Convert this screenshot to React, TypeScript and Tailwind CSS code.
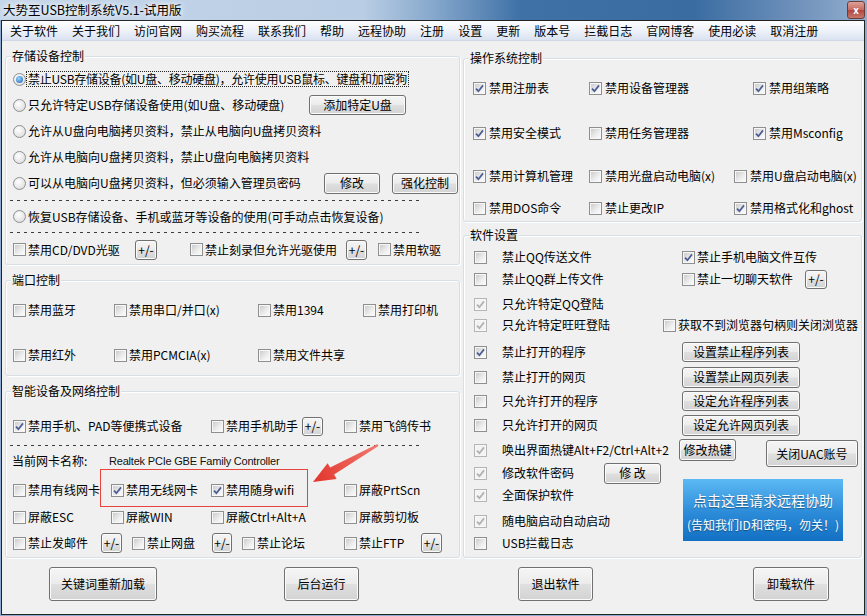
import React from "react";

type CBProps = { checked?: boolean; disabled?: boolean };

function Box({ checked, disabled }: CBProps) {
  return (
    <span
      className={
        "relative block h-[13px] w-[13px] shrink-0 border bg-[#f7f7f7] p-[1px] " +
        (disabled ? "border-[#b5b5b5]" : "border-[#8e8f8f]")
      }
    >
      <span
        className={
          "block h-full w-full " +
          (disabled ? "bg-[#f3f3f3]" : "bg-[linear-gradient(135deg,#cdcdcd,#ededed_60%,#fbfbfb)]")
        }
      />
      {checked && (
        <svg viewBox="0 0 11 11" className="absolute inset-0 h-[11px] w-[11px]">
          <path
            d="M2 5.6 4.4 8.2 9 2.4"
            fill="none"
            stroke={disabled ? "#b0b0b0" : "#4b5d92"}
            strokeWidth="1.7"
          />
        </svg>
      )}
    </span>
  );
}

function Check({
  label,
  checked,
  disabled,
  w = "",
  gap = "gap-[2px]",
}: CBProps & { label: React.ReactNode; w?: string; gap?: string }) {
  return (
    <div className={`flex shrink-0 items-center whitespace-nowrap ${gap} ${w}`}>
      <Box checked={checked} disabled={disabled} />
      <span>{label}</span>
    </div>
  );
}

function Radio({ checked }: { checked?: boolean }) {
  return (
    <span className="flex h-[13px] w-[13px] shrink-0 items-center justify-center rounded-full border border-[#8e8f8f] bg-[radial-gradient(circle_at_40%_35%,#ffffff,#d6d6d6)]">
      {checked && (
        <span className="h-[7px] w-[7px] rounded-full bg-[radial-gradient(circle_at_40%_35%,#9ad6ff,#1b5fb3)]" />
      )}
    </span>
  );
}

function Btn({ children, className = "" }: { children: React.ReactNode; className?: string }) {
  return (
    <button
      type="button"
      className={`flex shrink-0 items-center justify-center whitespace-nowrap rounded-[3px] border border-[#707070] bg-[linear-gradient(#f5f5f5,#ececec_48%,#dfdfdf_52%,#d3d3d3)] shadow-[inset_0_0_0_1px_#fbfbfb] ${className}`}
    >
      {children}
    </button>
  );
}

function Group({
  title,
  className = "",
  children,
}: {
  title: string;
  className?: string;
  children: React.ReactNode;
}) {
  return (
    <div
      className={`relative shrink-0 rounded-[3px] border border-[#d5dfe5] shadow-[inset_1px_1px_0_#ffffff,1px_1px_0_#ffffff] ${className}`}
    >
      <span className="absolute -top-[9px] left-[5px] bg-[#f0f0f0] px-[1px] leading-[16px]">{title}</span>
      {children}
    </div>
  );
}

function Dashed() {
  return (
    <div className="ml-[4px] h-[1px] w-[412px] shrink-0 bg-[linear-gradient(to_right,#3c3c3c_3px,transparent_3px)] bg-[length:7px_1px]" />
  );
}

const menu = [
  "关于软件",
  "关于我们",
  "访问官网",
  "购买流程",
  "联系我们",
  "帮助",
  "远程协助",
  "注册",
  "设置",
  "更新",
  "版本号",
  "拦截日志",
  "官网博客",
  "使用必读",
  "取消注册",
];

export default function App() {
  return (
    <div className="relative h-[616px] w-[867px] overflow-hidden bg-[#8fabcf] font-['Noto_Sans_CJK_SC','Noto_Sans',sans-serif] text-[12px] leading-[16px] text-black">
      {/* title bar */}
      <div className="flex h-[20px] items-center bg-[linear-gradient(to_right,#c5d6ea_0%,#b9cde4_42%,#86a8cc_50%,#3f71a7_60%,#3a6ca2_80%,#7898bf_94%,#93b0d1_100%)]">
        <span className="ml-[3px] text-[12.5px] [text-shadow:0_0_5px_#fff,0_0_8px_#fff]">
          大势至USB控制系统V5.1-试用版
        </span>
        <span className="ml-auto mr-[2px] flex h-[18px] w-[18px] items-center justify-center rounded-[3px] border border-[#6b3d3a] bg-[linear-gradient(#dea29a,#c6685e_50%,#b0473c_51%,#c8766c)] text-[10px] font-bold leading-none text-white">
          x
        </span>
      </div>

      <div className="ml-[1px] flex h-[595px] w-[864px] flex-col border border-[#222] bg-[#f0f0f0]">
        {/* menu bar */}
        <div className="flex h-[20px] shrink-0 items-center gap-[14px] border-b border-[#d0d8e6] bg-[linear-gradient(#fdfdfe,#eef2f9_50%,#dae2f1)] pl-[8px]">
          {menu.map((m) => (
            <span key={m} className="whitespace-nowrap">
              {m}
            </span>
          ))}
        </div>

        <div className="flex gap-[3px] pl-[3px]">
          {/* left column */}
          <div className="flex w-[455px] flex-col">
            <Group title="存储设备控制" className="mt-[15px] h-[209px]">
              <div className="flex flex-col pt-[9px]">
                <div className="flex h-[26px] items-center pl-[7px]">
                  <Radio checked />
                  <span className="whitespace-nowrap border border-dotted border-[#222] px-[1px] leading-[14px] tracking-[-0.25px]">
                    禁止USB存储设备(如U盘、移动硬盘)，允许使用USB鼠标、键盘和加密狗
                  </span>
                </div>
                <div className="flex h-[26px] items-center gap-[2px] pl-[7px]">
                  <Radio />
                  <span className="w-[279px] whitespace-nowrap">只允许特定USB存储设备使用(如U盘、移动硬盘)</span>
                  <Btn className="h-[20px] w-[97px]">添加特定U盘</Btn>
                </div>
                <div className="flex h-[26px] items-center gap-[2px] pl-[7px]">
                  <Radio />
                  <span className="whitespace-nowrap">允许从U盘向电脑拷贝资料，禁止从电脑向U盘拷贝资料</span>
                </div>
                <div className="flex h-[26px] items-center gap-[2px] pl-[7px]">
                  <Radio />
                  <span className="whitespace-nowrap">允许从电脑向U盘拷贝资料，禁止U盘向电脑拷贝资料</span>
                </div>
                <div className="flex h-[26px] items-center gap-[2px] pl-[7px]">
                  <Radio />
                  <span className="w-[294px] whitespace-nowrap">可以从电脑向U盘拷贝资料，但必须输入管理员密码</span>
                  <Btn className="h-[21px] w-[56px]">修改</Btn>
                  <Btn className="ml-[10px] h-[21px] w-[66px]">强化控制</Btn>
                </div>
                <div className="mt-[4px]">
                  <Dashed />
                </div>
                <div className="flex h-[31px] items-center gap-[2px] pl-[7px]">
                  <Radio />
                  <span className="whitespace-nowrap">恢复USB存储设备、手机或蓝牙等设备的使用(可手动点击恢复设备)</span>
                </div>
                <Dashed />
                <div className="flex h-[31px] items-center pl-[7px] pt-[2px]">
                  <Check label="禁用CD/DVD光驱" w="w-[122px]" />
                  <Btn className="h-[20px] w-[22px]">+/-</Btn>
                  <Check label="禁止刻录但允许光驱使用" w="ml-[33px] w-[156px]" />
                  <Btn className="h-[20px] w-[21px]">+/-</Btn>
                  <Check label="禁用软驱" w="ml-[11px]" />
                </div>
              </div>
            </Group>

            <Group title="端口控制" className="mt-[15px] h-[96px]">
              <div className="flex flex-col pl-[7px] pt-[18px]">
                <div className="flex h-[22px] items-center">
                  <Check label="禁用蓝牙" w="w-[101px]" />
                  <Check label="禁用串口/并口(x)" w="w-[144px]" />
                  <Check label="禁用1394" w="w-[105px]" />
                  <Check label="禁用打印机" />
                </div>
                <div className="mt-[23px] flex h-[22px] items-center">
                  <Check label="禁用红外" w="w-[101px]" />
                  <Check label="禁用PCMCIA(x)" w="w-[144px]" />
                  <Check label="禁用文件共享" />
                </div>
              </div>
            </Group>

            <Group title="智能设备及网络控制" className="mt-[15px] h-[167px]">
              <div className="flex flex-col pt-[23px]">
                <div className="flex h-[22px] items-center pl-[7px]">
                  <Check label="禁用手机、PAD等便携式设备" checked w="w-[198px]" />
                  <Check label="禁用手机助手" w="w-[91px]" />
                  <Btn className="h-[19px] w-[21px]">+/-</Btn>
                  <Check label="禁用飞鸽传书" w="ml-[21px]" />
                </div>
                <div className="mt-[8px]">
                  <Dashed />
                </div>
                <div className="mt-[5px] flex h-[20px] items-center pl-[6px]">
                  <span className="w-[97px] whitespace-nowrap">当前网卡名称:</span>
                  <span className="whitespace-nowrap font-['Liberation_Sans',Arial,sans-serif] text-[11px] tracking-[-0.2px] text-[#111]">
                    Realtek PCIe GBE Family Controller
                  </span>
                </div>
                <div className="mt-[8px] flex h-[22px] items-center pl-[7px]">
                  <Check label="禁用有线网卡" w="w-[98px]" />
                  <Check label="禁用无线网卡" checked w="w-[100px]" />
                  <Check label="禁用随身wifi" checked w="w-[133px]" />
                  <Check label="屏蔽PrtScn" />
                </div>
                <div className="mt-[5px] flex h-[22px] items-center pl-[7px]">
                  <Check label="屏蔽ESC" w="w-[98px]" />
                  <Check label="屏蔽WIN" w="w-[100px]" />
                  <Check label="屏蔽Ctrl+Alt+A" w="w-[133px]" />
                  <Check label="屏蔽剪切板" />
                </div>
                <div className="mt-[4px] flex h-[22px] items-center pl-[7px]">
                  <Check label="禁止发邮件" w="w-[88px]" />
                  <Btn className="h-[20px] w-[21px]">+/-</Btn>
                  <Check label="禁止网盘" w="ml-[10px] w-[80px]" />
                  <Btn className="h-[20px] w-[20px]">+/-</Btn>
                  <Check label="禁止论坛" w="ml-[10px] w-[102px]" />
                  <Check label="禁止FTP" w="w-[77px]" />
                  <Btn className="h-[20px] w-[21px]">+/-</Btn>
                </div>
              </div>
            </Group>
          </div>

          {/* right column */}
          <div className="flex w-[399px] flex-col">
            <Group title="操作系统控制" className="mt-[17px] h-[164px]">
              <div className="flex flex-col pl-[9px] pt-[18px]">
                <div className="flex h-[22px] items-center">
                  <Check label="禁用注册表" checked w="w-[116px]" gap="gap-[3px]" />
                  <Check label="禁用设备管理器" checked w="w-[164px]" gap="gap-[3px]" />
                  <Check label="禁用组策略" checked gap="gap-[3px]" />
                </div>
                <div className="mt-[23px] flex h-[22px] items-center">
                  <Check label="禁用安全模式" checked w="w-[116px]" gap="gap-[3px]" />
                  <Check label="禁用任务管理器" w="w-[164px]" gap="gap-[3px]" />
                  <Check label="禁用Msconfig" checked gap="gap-[3px]" />
                </div>
                <div className="mt-[21px] flex h-[22px] items-center">
                  <Check label="禁用计算机管理" checked w="w-[116px]" gap="gap-[3px]" />
                  <Check label="禁用光盘启动电脑(x)" w="w-[145px]" gap="gap-[3px]" />
                  <Check label="禁用U盘启动电脑(x)" gap="gap-[3px]" />
                </div>
                <div className="mt-[10px] flex h-[22px] items-center">
                  <Check label="禁用DOS命令" w="w-[116px]" gap="gap-[3px]" />
                  <Check label="禁止更改IP" w="w-[145px]" gap="gap-[3px]" />
                  <Check label="禁用格式化和ghost" checked gap="gap-[3px]" />
                </div>
              </div>
            </Group>

            <Group title="软件设置" className="mt-[13px] h-[323px]">
              <div className="flex flex-col pl-[10px] pt-[11px]">
                <div className="flex h-[20px] items-center">
                  <Check label="禁止QQ传送文件" w="w-[208px]" gap="gap-[15px]" />
                  <Check label="禁止手机电脑文件互传" checked />
                </div>
                <div className="mt-[2px] flex h-[20px] items-center">
                  <Check label="禁止QQ群上传文件" w="w-[208px]" gap="gap-[15px]" />
                  <Check label="禁止一切聊天软件" w="w-[123px]" />
                  <Btn className="h-[19px] w-[22px]">+/-</Btn>
                </div>
                <div className="mt-[5px] flex h-[20px] items-center">
                  <Check label="只允许特定QQ登陆" checked disabled gap="gap-[15px]" />
                </div>
                <div className="mt-[1px] flex h-[20px] items-center">
                  <Check label="只允许特定旺旺登陆" checked disabled w="w-[189px]" gap="gap-[15px]" />
                  <Check label="获取不到浏览器句柄则关闭浏览器" />
                </div>
                <div className="mt-[7px] flex h-[20px] items-center">
                  <Check label="禁止打开的程序" checked w="w-[208px]" gap="gap-[15px]" />
                  <Btn className="h-[20px] w-[118px]">设置禁止程序列表</Btn>
                </div>
                <div className="mt-[5px] flex h-[20px] items-center">
                  <Check label="禁止打开的网页" w="w-[208px]" gap="gap-[15px]" />
                  <Btn className="h-[21px] w-[118px]">设置禁止网页列表</Btn>
                </div>
                <div className="mt-[4px] flex h-[20px] items-center">
                  <Check label="只允许打开的程序" w="w-[208px]" gap="gap-[15px]" />
                  <Btn className="h-[20px] w-[118px]">设定允许程序列表</Btn>
                </div>
                <div className="mt-[4px] flex h-[20px] items-center">
                  <Check label="只允许打开的网页" w="w-[208px]" gap="gap-[15px]" />
                  <Btn className="h-[21px] w-[118px]">设定允许网页列表</Btn>
                </div>
                <div className="mt-[5px] flex h-[20px] items-center">
                  <Check label="唤出界面热键Alt+F2/Ctrl+Alt+2" checked disabled w="w-[205px]" gap="gap-[15px]" />
                  <Btn className="h-[22px] w-[57px]">修改热键</Btn>
                  <Btn className="ml-[30px] h-[27px] w-[92px] self-start">关闭UAC账号</Btn>
                </div>
                <div className="flex">
                  <div className="flex w-[209px] flex-col">
                    <div className="mt-[3px] flex h-[20px] items-center">
                      <Check label="修改软件密码" checked disabled w="w-[130px]" gap="gap-[15px]" />
                      <Btn className="h-[21px] w-[57px]">修 改</Btn>
                    </div>
                    <div className="mt-[2px] flex h-[20px] items-center">
                      <Check label="全面保护软件" checked disabled gap="gap-[15px]" />
                    </div>
                    <div className="mt-[6px] flex h-[20px] items-center">
                      <Check label="随电脑启动自动启动" checked disabled gap="gap-[15px]" />
                    </div>
                    <div className="mt-[2px] flex h-[20px] items-center">
                      <Check label="USB拦截日志" gap="gap-[15px]" />
                    </div>
                  </div>
                  <div className="mt-[19px] flex h-[62px] w-[160px] flex-col items-center bg-[linear-gradient(#5cb9f4,#2b8bd8_55%,#1370c4)] pt-[12px] text-white [text-shadow:0_1px_1px_rgba(0,0,0,0.35)]">
                    <span className="whitespace-nowrap text-[14px] leading-[18px]">点击这里请求远程协助</span>
                    <span className="mt-[8px] whitespace-nowrap text-[12px] leading-[16px]">(告知我们ID和密码，勿关！)</span>
                  </div>
                </div>
              </div>
            </Group>
          </div>
        </div>

        {/* bottom buttons */}
        <div className="mt-[9px] flex pl-[47px]">
          <Btn className="h-[34px] w-[108px]">关键词重新加载</Btn>
          <Btn className="ml-[127px] h-[34px] w-[75px]">后台运行</Btn>
          <Btn className="ml-[159px] h-[34px] w-[75px]">退出软件</Btn>
          <Btn className="ml-[160px] h-[34px] w-[76px]">卸载软件</Btn>
        </div>
      </div>

      {/* annotation overlay */}
      <svg
        className="pointer-events-none absolute inset-0"
        width="867"
        height="616"
        viewBox="0 0 867 616"
      >
        <defs>
          <linearGradient id="arr" x1="378" y1="445" x2="313" y2="482" gradientUnits="userSpaceOnUse">
            <stop offset="0" stopColor="#f27a70" />
            <stop offset="1" stopColor="#e2332b" />
          </linearGradient>
        </defs>
        <rect x="100.5" y="469.5" width="207" height="37" fill="none" stroke="#e5453d" strokeWidth="1" />
        <polygon
          points="313,482 336.6,478.9 334.1,474.6 378.5,445.9 377.5,444.1 330.1,467.6 327.6,463.3"
          fill="url(#arr)"
        />
      </svg>
    </div>
  );
}
